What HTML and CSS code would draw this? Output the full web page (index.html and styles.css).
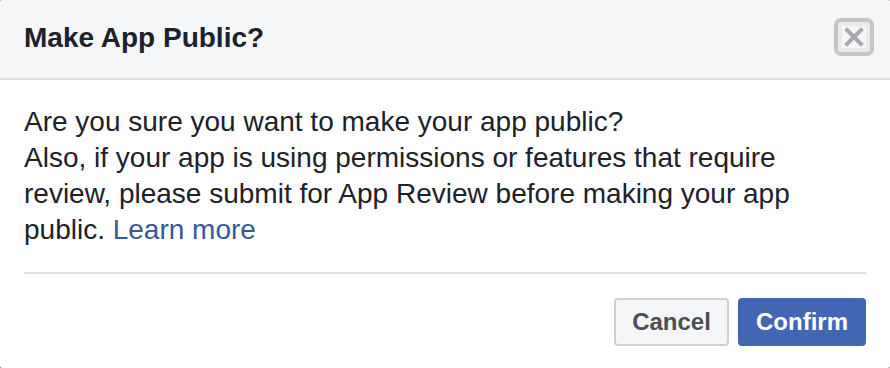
FILE: index.html
```html
<!DOCTYPE html>
<html lang="en">
<head>
    <meta charset="UTF-8">
    <title>Make App Public?</title>
    <link rel="stylesheet" href="styles.css">
</head>
<body>
    <div class="dialog">
        <div class="dialog-header">
            <h2>Make App Public?</h2>
            <button class="close-btn" aria-label="Close">
                <svg width="40" height="38" viewBox="0 0 40 38">
                    <rect x="2" y="2" width="36" height="34" rx="5" fill="#e9eaeb" stroke="#c4c5c7" stroke-width="4"/>
                    <rect x="8" y="8" width="24" height="22" fill="#f5f6f7"/>
                    <path d="M13 12 L27 26 M27 12 L13 26" stroke="#a8aaad" stroke-width="4" stroke-linecap="square"/>
                </svg>
            </button>
        </div>

        <div class="dialog-body">
            <p>
                Are you sure you want to make your app public?<br>
                Also, if your app is using permissions or features that require
                review, please submit for App Review before making your app
                public. <a href="#">Learn more</a>
            </p>
        </div>

        <div class="dialog-footer">
            <button class="btn btn-cancel">Cancel</button>
            <button class="btn btn-confirm">Confirm</button>
        </div>
    </div>
</body>
</html>
```

FILE: styles.css
```css
* {
    margin: 0;
    padding: 0;
    box-sizing: border-box;
}

body {
    font-family: "Liberation Sans", Arial, Helvetica, sans-serif;
    background: #5a5a5a;
    width: 890px;
    height: 368px;
    overflow: hidden;
}

.dialog {
    background: white;
    width: 890px;
    height: 368px;
    border-radius: 2px;
    overflow: hidden;
}

.dialog-header {
    background: #f5f6f7;
    height: 80px;
    border-bottom: 2px solid #dddfe2;
    display: flex;
    align-items: center;
    justify-content: space-between;
    padding: 0 16px 2px 24px;
}

.dialog-header h2 {
    color: #1d2129;
    font-size: 28px;
    font-weight: 700;
}

.close-btn {
    background: none;
    border: none;
    display: flex;
    margin-top: -2px;
    cursor: pointer;
}

.dialog-body {
    padding: 24px 24px 0;
}

.dialog-body p {
    color: #1d2129;
    font-size: 28px;
    line-height: 36px;
    padding-bottom: 24px;
    border-bottom: 2px solid #dddfe2;
}

.dialog-body a {
    color: #365899;
    text-decoration: none;
}

.dialog-footer {
    display: flex;
    justify-content: flex-end;
    gap: 9px;
    padding: 24px 24px 0;
}

.btn {
    font-family: inherit;
    font-size: 24px;
    font-weight: 700;
    height: 48px;
    border-radius: 4px;
    cursor: pointer;
}

.btn-cancel {
    background: #f5f6f7;
    color: #4b4f56;
    border: 2px solid #ced0d4;
    width: 115px;
}

.btn-confirm {
    background: #4267b2;
    color: white;
    border: 2px solid #4267b2;
    width: 128px;
}
```
